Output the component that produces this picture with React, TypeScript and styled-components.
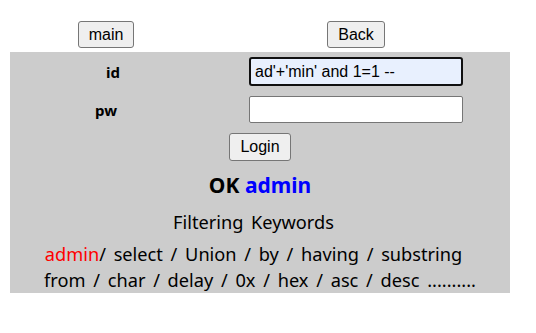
import React from "react";
import styled, { createGlobalStyle } from "styled-components";

const Global = createGlobalStyle`
  html, body { margin: 0; padding: 0; background: #fff; }
  body { font-family: "Noto Sans", "Noto Sans CJK KR", sans-serif; }
`;

const Page = styled.div`
  width: 500px;
  margin-left: 10px;
  padding-top: 21px;
`;

const Row = styled.div<{ $h: number; $mt?: number }>`
  display: grid;
  grid-template-columns: 192px 308px;
  align-items: center;
  height: ${(p) => p.$h}px;
  margin-top: ${(p) => p.$mt ?? 0}px;
`;

const Cell = styled.div`
  display: flex;
  justify-content: center;
  align-items: center;
`;

const Button = styled.button<{ $h?: number }>`
  font-family: "Liberation Sans", Arial, sans-serif;
  font-size: 16px;
  height: ${(p) => p.$h ?? 27}px;
  padding: 0 10px;
  border: 1px solid #767676;
  border-radius: 3px;
  background: #efefef;
  color: #000;
`;

const Panel = styled.div`
  margin-top: 4px;
  background: #cccccc;
  padding-top: 5px;
  height: 236px;
`;

const Label = styled.div<{ $shift: number }>`
  font-family: "Noto Sans", sans-serif;
  font-weight: bold;
  font-size: 15px;
  color: #000;
  padding-left: ${(p) => p.$shift}px;
`;

const Input = styled.input<{ $focus?: boolean }>`
  box-sizing: border-box;
  width: 214px;
  height: ${(p) => (p.$focus ? 29 : 27)}px;
  font-family: "Liberation Sans", Arial, sans-serif;
  font-size: 16px;
  padding: 0 4px;
  color: #000;
  border: ${(p) => (p.$focus ? "2px solid #101010" : "1px solid #767676")};
  border-radius: ${(p) => (p.$focus ? 3 : 2)}px;
  background: ${(p) => (p.$focus ? "#e8f0fe" : "#fff")};
  outline: none;
`;

const Center = styled.div<{ $mt: number }>`
  display: flex;
  justify-content: center;
  margin-top: ${(p) => p.$mt}px;
`;

const Result = styled.div`
  font-family: "Noto Sans", sans-serif;
  font-weight: bold;
  font-size: 21px;
  line-height: 24px;
  text-align: center;
  margin-top: 12px;
  color: #000;
`;

const Blue = styled.span`
  color: #0000ff;
`;

const TextLine = styled.div<{ $mt?: number; $pr?: number; $lh?: number }>`
  font-family: "Noto Sans", sans-serif;
  font-size: 18.2px;
  word-spacing: 3px;
  line-height: ${(p) => p.$lh ?? 26}px;
  text-align: center;
  margin-top: ${(p) => p.$mt ?? 0}px;
  padding-right: ${(p) => p.$pr ?? 0}px;
  color: #000;
`;

const Red = styled.span`
  color: #ff0000;
`;

export default function App() {
  return (
    <>
      <Global />
      <Page>
        <Row $h={27}>
          <Cell>
            <Button>main</Button>
          </Cell>
          <Cell>
            <Button>Back</Button>
          </Cell>
        </Row>
        <Panel>
          <Row $h={29}>
            <Cell>
              <Label $shift={14}>id</Label>
            </Cell>
            <Cell>
              <Input $focus defaultValue="ad'+'min' and 1=1 --" />
            </Cell>
          </Row>
          <Row $h={27} $mt={10}>
            <Cell>
              <Label $shift={0}>pw</Label>
            </Cell>
            <Cell>
              <Input type="password" />
            </Cell>
          </Row>
          <Center $mt={10}>
            <Button $h={28}>Login</Button>
          </Center>
          <Result>
            OK <Blue>admin</Blue>
          </Result>
          <TextLine $mt={13} $pr={13} $lh={24}>
            Filtering Keywords
          </TextLine>
          <TextLine $mt={7} $pr={13}>
            <Red>admin</Red>/ select / Union / by / having / substring
          </TextLine>
          <TextLine>from / char / delay / 0x / hex / asc / desc ..........</TextLine>
        </Panel>
      </Page>
    </>
  );
}
